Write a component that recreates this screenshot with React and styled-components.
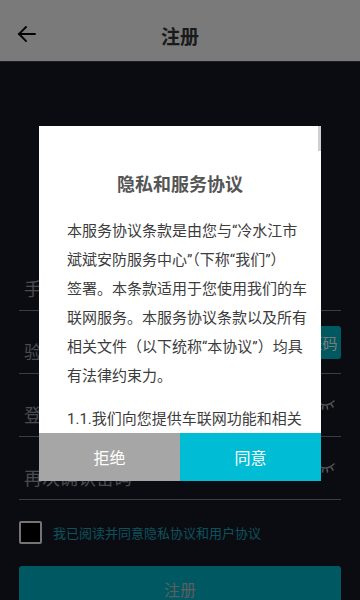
import React from 'react';
import styled, { createGlobalStyle } from 'styled-components';

const GlobalStyle = createGlobalStyle`
    html, body {
        margin: 0;
        padding: 0;
        background: #171a27;
    }
    body {
        font-family: Roboto, "Noto Sans CJK SC", sans-serif;
    }
`

const Page = styled.div`
    width: 360px;
    height: 600px;
    overflow: hidden;
    background: #171a27;
    display: flex;
    flex-direction: column;
`

const Header = styled.div`
    height: 61px;
    flex-shrink: 0;
    background: #ffffff;
    border-bottom: 1px solid #444;
    display: flex;
    align-items: center;
    position: relative;
    justify-content: center;
`

const BackButton = styled.div`
    position: absolute;
    left: 17px;
    top: 24px;
    width: 20px;
    height: 20px;
`

const Title = styled.div`
    font-size: 19px;
    font-weight: 700;
    color: #383838;
    margin-top: 9px;
`

const Form = styled.div`
    padding: 186px 19px 0 19px;
    display: flex;
    flex-direction: column;
`

const Field = styled.div`
    height: 62px;
    border-bottom: 1px solid #7e7f86;
    display: flex;
    align-items: center;
    justify-content: space-between;
    padding: 0 5px;
`

const Label = styled.div`
    font-size: 18px;
    color: #9c9ea6;
    margin-top: ${p => p.$drop || 0}px;
`

const CodeButton = styled.div`
    width: 82px;
    height: 33px;
    margin-right: -5px;
    background: #00b8c9;
    border-radius: 3px;
    color: #fff;
    font-size: 15px;
    display: flex;
    align-items: center;
    justify-content: center;
`

const Agree = styled.div`
    display: flex;
    align-items: center;
    gap: 11px;
    margin-top: 21px;
`

const Check = styled.div`
    width: 19px;
    height: 19px;
    border: 2px solid #f2f2f2;
    border-radius: 2px;
    background: #000;
`

const AgreeText = styled.div`
    font-size: 13px;
    color: #1ca9bd;
`

const Submit = styled.div`
    margin-top: 22px;
    height: 46px;
    border-radius: 3px;
    background: #00b8cc;
    color: #c0c6c8;
    font-size: 16px;
    display: flex;
    align-items: center;
    justify-content: center;
`

const Overlay = styled.div`
    position: fixed;
    inset: 0;
    background: rgba(0, 0, 0, 0.52);
    display: flex;
    justify-content: center;
    padding-top: 126px;
`

const Dialog = styled.div`
    width: 282px;
    height: 355px;
    background: #fff;
    display: flex;
    flex-direction: column;
    position: relative;
`

const Scrollbar = styled.div`
    position: absolute;
    right: 0;
    top: 0;
    width: 3px;
    height: 25px;
    background: #cfcfcf;
`

const Content = styled.div`
    height: 307px;
    overflow: hidden;
    padding: 46px 28px 0 28px;
    box-sizing: border-box;
`

const DialogTitle = styled.div`
    text-align: center;
    font-size: 18px;
    font-weight: 700;
    color: #555;
    line-height: 26px;
    margin-bottom: 19px;
`

const Para = styled.div`
    font-size: 15px;
    line-height: 29px;
    color: #3c3c3c;
    white-space: nowrap;
    margin-bottom: 14px;
`

const Buttons = styled.div`
    display: flex;
    height: 48px;
`

const DialogButton = styled.div`
    flex: 1;
    background: ${p => p.$primary ? '#00bcd4' : '#a6a6a6'};
    color: #fff;
    font-size: 16px;
    display: flex;
    align-items: center;
    justify-content: center;
`

function EyeClosed() {
    return (
        <svg width="22" height="14" viewBox="0 0 22 14" fill="none" stroke="#a7a9ae" strokeWidth="1.6" strokeLinecap="round">
            <path d="M2 3 Q11 11 20 3" />
            <line x1="5" y1="6" x2="3" y2="9" />
            <line x1="9" y1="8" x2="8.5" y2="11" />
            <line x1="13" y1="8" x2="13.5" y2="11" />
            <line x1="17" y1="6" x2="19" y2="9" />
        </svg>
    )
}

function App() {
    return (
        <>
            <GlobalStyle />
            <Page>
                <Header>
                    <BackButton>
                        <svg width="20" height="20" viewBox="0 0 20 20" fill="none" stroke="#000" strokeWidth="1.8" strokeLinecap="round">
                            <line x1="2" y1="10" x2="18" y2="10" />
                            <polyline points="9,3 2,10 9,17" />
                        </svg>
                    </BackButton>
                    <Title>注册</Title>
                </Header>
                <Form>
                    <Field><Label $drop={18}>手机号</Label></Field>
                    <Field>
                        <Label $drop={18}>验证码</Label>
                        <CodeButton>获取验证码</CodeButton>
                    </Field>
                    <Field>
                        <Label $drop={18}>登录密码</Label>
                        <EyeClosed />
                    </Field>
                    <Field>
                        <Label $drop={18}>再次确认密码</Label>
                        <EyeClosed />
                    </Field>
                    <Agree>
                        <Check />
                        <AgreeText>我已阅读并同意隐私协议和用户协议</AgreeText>
                    </Agree>
                    <Submit>注册</Submit>
                </Form>
            </Page>
            <Overlay>
                <Dialog>
                    <Scrollbar />
                    <Content>
                        <DialogTitle>隐私和服务协议</DialogTitle>
                        <Para>
                            本服务协议条款是由您与“冷水江市<br />
                            斌斌安防服务中心”（下称“我们”）<br />
                            签署。本条款适用于您使用我们的车<br />
                            联网服务。本服务协议条款以及所有<br />
                            相关文件（以下统称“本协议”）均具<br />
                            有法律约束力。
                        </Para>
                        <Para>
                            1.1.我们向您提供车联网功能和相关<br />
                            服务，包括车辆定位、轨迹查询等。
                        </Para>
                    </Content>
                    <Buttons>
                        <DialogButton>拒绝</DialogButton>
                        <DialogButton $primary>同意</DialogButton>
                    </Buttons>
                </Dialog>
            </Overlay>
        </>
    )
}

export default App;
